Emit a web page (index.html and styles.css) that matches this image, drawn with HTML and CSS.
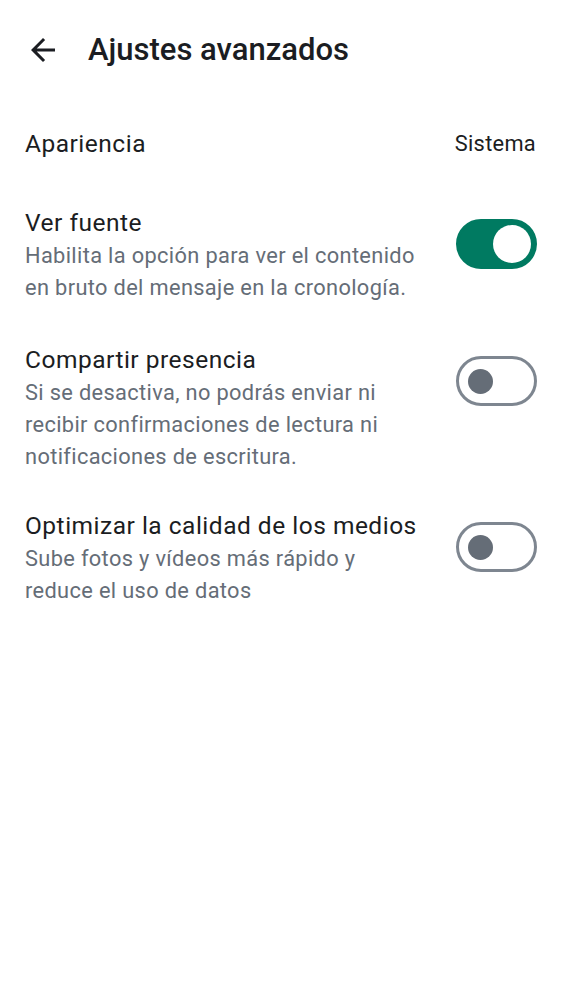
FILE: index.html
```html
<!DOCTYPE html>
<html lang="es">
<head>
<meta charset="utf-8">
<title>Ajustes avanzados</title>
<link rel="stylesheet" href="styles.css">
</head>
<body>
<div class="screen">
  <header class="topbar">
    <button class="back" aria-label="Atrás">
      <svg viewBox="0 0 24 24" width="36" height="36"><path d="M20 11H7.83l5.59-5.59L12 4l-8 8 8 8 1.41-1.41L7.83 13H20v-2z" fill="#1b1d22"/></svg>
    </button>
    <h1 class="title">Ajustes avanzados</h1>
  </header>

  <div class="row row-simple">
    <div class="row-title">Apariencia</div>
    <div class="row-value">Sistema</div>
  </div>

  <div class="row row-first">
    <div class="row-text">
      <div class="row-title">Ver fuente</div>
      <div class="row-sub">Habilita la opción para ver el contenido en bruto del mensaje en la cronología.</div>
    </div>
    <div class="switch on"><span class="knob"></span></div>
  </div>

  <div class="row row-second">
    <div class="row-text">
      <div class="row-title">Compartir presencia</div>
      <div class="row-sub">Si se desactiva, no podrás enviar ni recibir confirmaciones de lectura ni notificaciones de escritura.</div>
    </div>
    <div class="switch"><span class="knob"></span></div>
  </div>

  <div class="row">
    <div class="row-text">
      <div class="row-title">Optimizar la calidad de los medios</div>
      <div class="row-sub">Sube fotos y vídeos más rápido y reduce el uso de datos</div>
    </div>
    <div class="switch"><span class="knob"></span></div>
  </div>
</div>
</body>
</html>
```

FILE: styles.css
```css
* { box-sizing: border-box; }
html, body { margin: 0; padding: 0; background: #ffffff; }
body {
  font-family: Roboto, "Noto Sans", "Liberation Sans", sans-serif;
  color: #1b1d22;
}
.screen { width: 562px; min-height: 1000px; }

.topbar {
  height: 100px;
  display: flex;
  align-items: center;
  padding-left: 25px;
}
.back {
  width: 36px; height: 36px;
  padding: 0; border: 0; background: none;
  display: flex; align-items: center; justify-content: center;
}
.back svg { display: block; }
.title {
  margin: 0 0 0 27px;
  font-size: 31px;
  font-weight: 500;
  line-height: 36px;
  letter-spacing: 0;
  color: #1b1d22;
}

.row {
  display: flex;
  align-items: flex-start;
  padding: 19px 25px 20px 25px;
  gap: 31px;
}
.row-first { padding-bottom: 21px; }
.row-second { padding-bottom: 18px; }
.row-simple {
  align-items: center;
  justify-content: space-between;
  padding: 28px 26px 28px 25px;
}
.row-text { flex: 1; min-width: 0; }
.row-title {
  font-size: 24.5px;
  line-height: 32px;
  letter-spacing: 0.5px;
  color: #1b1d22;
}
.row-value {
  font-size: 21.8px;
  line-height: 32px;
  letter-spacing: 0.3px;
  color: #1b1d22;
}
.row-sub {
  margin-top: 1px;
  font-size: 21.8px;
  line-height: 32px;
  letter-spacing: 0.35px;
  color: #656d77;
}

.switch {
  flex: none;
  width: 81px; height: 50px;
  margin-top: 12px;
  border-radius: 25px;
  border: 3px solid #7e8690;
  background: #ffffff;
  display: flex;
  align-items: center;
  padding-left: 9px;
}
.switch .knob {
  width: 25px; height: 25px;
  border-radius: 50%;
  background: #656d77;
}
.switch.on {
  background: #007a61;
  border-color: #007a61;
  justify-content: flex-end;
  padding: 0 3px 0 0;
}
.switch.on .knob {
  width: 38px; height: 38px;
  background: #ffffff;
}
```
